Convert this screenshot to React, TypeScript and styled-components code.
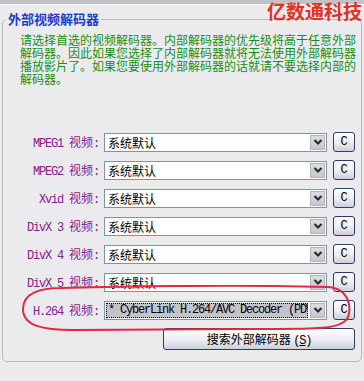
import styled, {createGlobalStyle} from "styled-components";

const GlobalStyle = createGlobalStyle`
    html, body {
        margin: 0;
        padding: 0;
        background: #ebebee;
    }
    body {
        font-family: "Noto Sans CJK SC", "Liberation Sans", sans-serif;
    }
`;

type Decoder = {
    codec: string;
    value: string;
    selected?: boolean;
};

const decoders: Decoder[] = [
    {codec: "MPEG1", value: "系统默认"},
    {codec: "MPEG2", value: "系统默认"},
    {codec: "Xvid", value: "系统默认"},
    {codec: "DivX 3", value: "系统默认"},
    {codec: "DivX 4", value: "系统默认"},
    {codec: "DivX 5", value: "系统默认"},
    {codec: "H.264", value: "* CyberLink H.264/AVC Decoder (PDVD8)", selected: true},
];

const Chevron = () => (
    <svg width="10" height="8" viewBox="0 0 10 8">
        <path d="M1.5 2 L5 5.5 L8.5 2" fill="none" stroke="#2a2a30" strokeWidth="2.2"/>
    </svg>
);

const App = () => {
    return (
        <Page>
            <GlobalStyle/>
            <TopBar/>
            <Watermark>亿数通科技</Watermark>
            <Panel>
                <Legend>外部视频解码器</Legend>
                <Description>
                    请选择首选的视频解码器。内部解码器的优先级将高于任意外部解码器。因此如果您选择了内部解码器就将无法使用外部解码器播放影片了。如果您要使用外部解码器的话就请不要选择内部的解码器。
                </Description>
                <Form>
                    {decoders.map((d) => (
                        <Row key={d.codec}>
                            <Label>
                                <Latin>{d.codec} </Latin>视频<Latin>:</Latin>
                            </Label>
                            <Select>
                                <Value $selected={d.selected}>
                                    <ValueText $mono={d.selected}>{d.value}</ValueText>
                                </Value>
                                <Arrow><Chevron/></Arrow>
                            </Select>
                            <ClearButton>C</ClearButton>
                        </Row>
                    ))}
                    <SearchButton>
                        搜索外部解码器 <Hotkey>(<u>S</u>)</Hotkey>
                    </SearchButton>
                </Form>
            </Panel>
            <Highlight width="332" height="47" viewBox="0 0 332 47">
                <path
                    d="M40 3 C120 1 230 0 306 2 C330 3 331 26 326 34 C318 45 290 44 230 44 L52 45 C22 45 2 41 2 24 C2 8 20 3 40 3 Z"
                    fill="none"
                    stroke="#e2283e"
                    strokeWidth="2"
                />
            </Highlight>
        </Page>
    );
};

const Page = styled.div`
    position: relative;
    width: 364px;
    height: 381px;
    overflow: hidden;
    background: #ebebee;
`;

const TopBar = styled.div`
    height: 4px;
    background: #c3c3c6;
    border-bottom: 1px solid #f6f6f8;
`;

const Watermark = styled.div`
    position: absolute;
    top: 0;
    right: 2px;
    font-size: 19px;
    line-height: 21px;
    font-weight: 700;
    color: #e5301f;
    font-family: "Noto Sans CJK SC", sans-serif;
    z-index: 2;
`;

const Panel = styled.fieldset`
    box-sizing: border-box;
    margin: 6px 2px 0;
    padding: 0;
    width: 360px;
    height: 351px;
    border: 1px solid #b7b7bc;
    border-radius: 5px;
    min-inline-size: 0;
`;

const Legend = styled.legend`
    margin-left: 3px;
    padding: 0 2px;
    font-size: 13px;
    line-height: 16px;
    font-weight: 700;
    color: #1d3ec6;
    font-family: "Noto Sans CJK SC", sans-serif;
`;

const Description = styled.div`
    width: 338px;
    margin: 6px 0 0 17px;
    font-size: 12px;
    line-height: 13px;
    color: #168f16;
`;

const Form = styled.div`
    display: flex;
    flex-direction: column;
    gap: 8px;
    margin-top: 47px;
`;

const Row = styled.div`
    display: flex;
    align-items: center;
    height: 20px;
`;

const Label = styled.div`
    width: 96px;
    margin-right: 5px;
    text-align: right;
    white-space: nowrap;
    font-size: 12px;
    color: #83208e;
    font-family: "Noto Sans CJK SC", sans-serif;
`;

const Latin = styled.span`
    font-family: "Liberation Mono", monospace;
    letter-spacing: -1.2px;
`;

const Select = styled.div`
    box-sizing: border-box;
    display: flex;
    width: 223px;
    height: 19px;
    border: 1px solid #7f93ad;
    background: #fff;
`;

const Value = styled.div<{$selected?: boolean}>`
    flex: 1;
    min-width: 0;
    overflow: hidden;
    display: flex;
    align-items: center;
    margin: 1px;
    padding-left: 2px;
    background: ${(p) => (p.$selected ? "#c3c3ca" : "transparent")};
    outline: ${(p) => (p.$selected ? "1px dotted #000" : "none")};
    outline-offset: -1px;
`;

const ValueText = styled.span<{$mono?: boolean}>`
    white-space: nowrap;
    font-size: 12px;
    line-height: 15px;
    color: #000;
    font-family: ${(p) => (p.$mono ? `"Liberation Mono", monospace` : `"Noto Sans CJK SC", sans-serif`)};
    letter-spacing: ${(p) => (p.$mono ? "-1.2px" : "0")};
`;

const Arrow = styled.div`
    box-sizing: border-box;
    width: 15px;
    margin: 1px;
    display: flex;
    align-items: center;
    justify-content: center;
    background: linear-gradient(#dcdce2, #c6c6ce);
    border: 1px solid #b4b4be;
`;

const ClearButton = styled.button`
    box-sizing: border-box;
    width: 22px;
    height: 20px;
    margin-left: 6px;
    padding: 0;
    border: 1px solid #2c3e66;
    border-radius: 3px;
    background: linear-gradient(#ffffff, #ececf2 55%, #cdcfdc);
    font-family: "Liberation Mono", monospace;
    font-size: 12px;
    color: #000;
`;

const SearchButton = styled.button`
    box-sizing: border-box;
    width: 192px;
    height: 22px;
    margin-left: 160px;
    padding: 0;
    border: 1px solid #2c3e66;
    border-radius: 3px;
    background: linear-gradient(#ffffff, #ececf2 55%, #cdcfdc);
    font-family: "Noto Sans CJK SC", sans-serif;
    font-size: 12px;
    color: #000;
`;

const Hotkey = styled.span`
    font-family: "Liberation Mono", monospace;
    letter-spacing: -1.2px;
`;

const Highlight = styled.svg`
    position: absolute;
    left: 21px;
    top: 285px;
    z-index: 3;
`;

export default App;
